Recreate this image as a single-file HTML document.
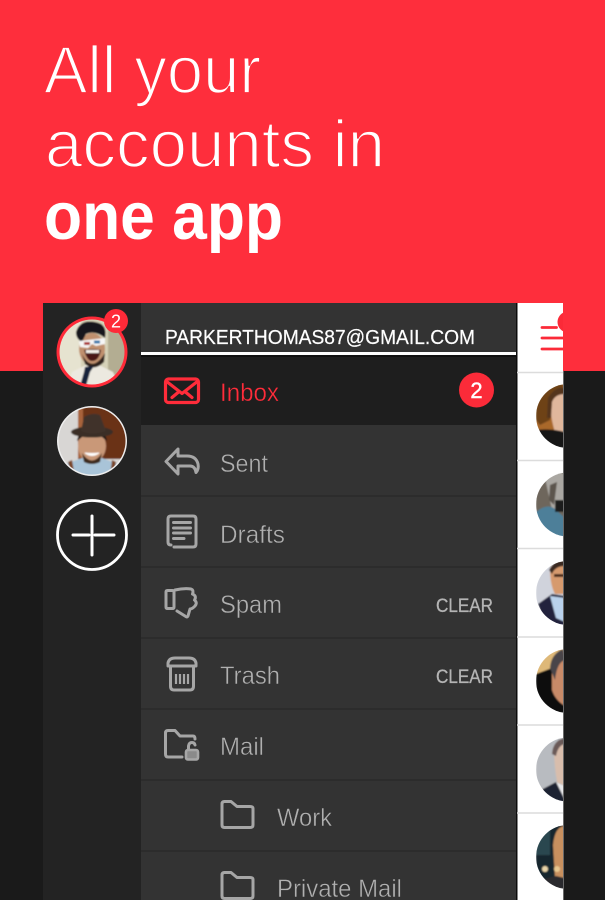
<!DOCTYPE html>
<html><head><meta charset="utf-8"><title>All your accounts in one app</title>
<style>
html,body{margin:0;padding:0;background:#1a1a1a}
svg{display:block}
text{font-family:"Liberation Sans",sans-serif}
.l{font-size:25px;fill:#b0b0b0;stroke:#333;stroke-width:.45}
.i{fill:none;stroke:#a6a6a6;stroke-width:3;stroke-linecap:round;stroke-linejoin:round}
.c{font-size:19px;fill:#b4b4b4;stroke:#b4b4b4;stroke-width:.3}
.sep{stroke:#2b2b2b;stroke-width:1.6}
.wsep{stroke:#dcdcdc;stroke-width:1.6}
</style></head>
<body>
<svg xmlns="http://www.w3.org/2000/svg" width="605" height="900" viewBox="0 0 605 900">
<defs>
<clipPath id="a1"><circle cx="92" cy="352" r="32.500"/></clipPath>
<clipPath id="a2"><circle cx="92" cy="441" r="33.500"/></clipPath>
<clipPath id="right"><rect x="517" y="303" width="46" height="597"/></clipPath>
<clipPath id="p1"><circle cx="568" cy="416" r="32"/></clipPath>
<clipPath id="p2"><circle cx="568" cy="504.500" r="32"/></clipPath>
<clipPath id="p3"><circle cx="568" cy="593" r="32"/></clipPath>
<clipPath id="p4"><circle cx="568" cy="681" r="32"/></clipPath>
<clipPath id="p5"><circle cx="568" cy="769.500" r="32"/></clipPath>
<clipPath id="p6"><circle cx="568" cy="857" r="32"/></clipPath>
<filter id="b" x="-10%" y="-10%" width="120%" height="120%"><feGaussianBlur stdDeviation=".8"/></filter>
</defs>

<rect width="605" height="900" fill="#1a1a1a"/>
<rect width="605" height="371" fill="#fe2e3c"/>

<g fill="#fff">
<text x="44" y="93" font-size="67" textLength="217" lengthAdjust="spacingAndGlyphs" stroke="#fe2e3c" stroke-width="1.800">All your</text>
<text x="45" y="167" font-size="67" textLength="340" lengthAdjust="spacingAndGlyphs" stroke="#fe2e3c" stroke-width="1.800">accounts in</text>
<text x="44" y="239" font-size="67" font-weight="700" textLength="239" lengthAdjust="spacingAndGlyphs">one app</text>
</g>

<!-- rail and drawer -->
<rect x="43" y="303" width="98" height="597" fill="#232323"/>
<rect x="141" y="303" width="376" height="597" fill="#333"/>
<rect x="141" y="355" width="376" height="70" fill="#1e1e1e"/>
<rect x="141" y="355" width="376" height="2" fill="#111"/>
<rect x="141" y="352" width="376" height="3" fill="#fff"/>
<line class="sep" x1="141" x2="517" y1="496" y2="496"/>
<line class="sep" x1="141" x2="517" y1="567" y2="567"/>
<line class="sep" x1="141" x2="517" y1="638" y2="638"/>
<line class="sep" x1="141" x2="517" y1="709" y2="709"/>
<line class="sep" x1="141" x2="517" y1="780" y2="780"/>
<line class="sep" x1="141" x2="517" y1="851" y2="851"/>

<text x="165" y="344" font-size="20" fill="#fff" stroke="#fff" stroke-width=".2" textLength="310" lengthAdjust="spacingAndGlyphs">PARKERTHOMAS87@GMAIL.COM</text>

<!-- avatar 1 -->
<circle cx="92" cy="352" r="35.500" fill="#ff2a38"/>
<g clip-path="url(#a1)"><g filter="url(#b)">
<rect x="57" y="317" width="70" height="70" fill="#d6d2b8"/>
<rect x="57" y="317" width="24" height="70" fill="#e6e3d0"/>
<rect x="108" y="317" width="20" height="70" fill="#b3ad92"/>
<path d="M68 387L72 372L86 365L99 365L113 372L120 387Z" fill="#ece9e0"/>
<ellipse cx="92" cy="349" rx="13" ry="16" fill="#c0906e"/>
<path d="M82 354Q92 374 105 353L104 362Q94 372 85 364Z" fill="#2e221c"/>
<path d="M76 332Q80 319 95 322Q108 324 105 338Q95 330 86 334L82 342Q76 339 76 332Z" fill="#17141a"/>
<path d="M84 350Q93 348 101 350Q99 361 92 361Q87 361 84 350Z" fill="#4a1616"/>
<rect x="86" y="350" width="13" height="3" fill="#f4f0ea"/>
<path d="M79 341L105 338L105 344L96 346L92 344L88 348L80 347Z" fill="#f6f6f6"/>
<rect x="84" y="342" width="6" height="3" fill="#a33"/><rect x="94" y="340.500" width="6" height="3" fill="#37a"/>
<path d="M85 367L94 366L90 372L86 386L80 386L84 372Z" fill="#16223a"/>
</g></g>

<circle cx="116" cy="321" r="12" fill="#ff2a38"/>
<text x="116" y="327.500" font-size="18" fill="#fff" text-anchor="middle">2</text>

<!-- avatar 2 -->
<circle cx="92" cy="441" r="35" fill="#eee"/>
<g clip-path="url(#a2)"><g filter="url(#b)">
<rect x="57" y="407" width="70" height="70" fill="#d8d6d4"/>
<rect x="78" y="407" width="50" height="52" fill="#6a3219"/>
<rect x="78" y="408" width="5" height="50" fill="#a8643a"/>
<path d="M62 477L66 464L82 458H102L118 464L122 477Z" fill="#a9c4d8"/>
<path d="M68 462L72 477H75L72 460ZM112 460L110 477H113L116 462Z" fill="#7a4526"/>
<ellipse cx="92" cy="446" rx="14" ry="16" fill="#c99878"/>
<path d="M82 453Q92 468 102 453L100 462Q92 466 84 462Z" fill="#3e2a1e"/>
<path d="M85 453Q92 458 99 453Q92 454 85 453Z" fill="#fff" stroke="#fff"/>
<path d="M77 441Q78 431 92 431Q106 431 107 441L102 437H82Z" fill="#1e1815"/>
<ellipse cx="92" cy="432" rx="21" ry="5.500" fill="#3a2e26"/>
<path d="M81 431L84 417Q92 412 100 415L106 431Q92 436 81 431Z" fill="#40332b"/>
</g></g>

<!-- plus -->
<circle cx="92" cy="535" r="34.500" fill="none" stroke="#fff" stroke-width="2.800"/>
<path d="M73 535H89M95 535H114M92 516V555" fill="none" stroke="#fff" stroke-width="3" stroke-linecap="round"/>

<!-- Inbox -->
<g fill="none" stroke="#ff2c3a" stroke-width="3.200" stroke-linecap="round" stroke-linejoin="round">
<rect x="165.500" y="379" width="33" height="23.500" rx="3"/>
<path d="M166 381L182 393.500L198 381M172 397.500L178 392.500M192 397.500L186 392.500"/>
</g>
<text x="220" y="401" font-size="25" fill="#ff2c3a" stroke="#1e1e1e" stroke-width=".35" textLength="59" lengthAdjust="spacingAndGlyphs">Inbox</text>
<circle cx="476.500" cy="390" r="17.500" fill="#fb2b39"/>
<text x="476.500" y="398" font-size="22" fill="#fff" stroke="#fff" stroke-width=".4" text-anchor="middle">2</text>

<!-- Sent -->
<path class="i" d="M178 449L166 461.500L178 474V466H190Q195 466 196 472.500Q199 469 198 464Q196 456 187 456H178Z"/>
<text class="l" x="220" y="472" textLength="48" lengthAdjust="spacingAndGlyphs">Sent</text>

<!-- Drafts -->
<path class="i" d="M171 545Q168 545 168 542V519Q168 516 171 516H193Q196 516 196 519V544Q196 547 193 547H174"/>
<path class="i" stroke-width="2.600" d="M173.500 522.500H190.500M173.500 528H190.500M173.500 533H190.500M173.500 538.500H184"/>
<text class="l" x="220" y="543" textLength="65" lengthAdjust="spacingAndGlyphs">Drafts</text>

<!-- Spam -->
<path class="i" d="M167.500 590.500H172.500Q174 590.500 174 592V607Q174 608.500 172.500 608.500H167.500Q166 608.500 166 607V592Q166 590.500 167.500 590.500Z"/>
<path class="i" d="M175 590Q184 588 191 589Q194 590 192.500 594Q197 596 194.500 600Q198 603 194.500 606.500Q192 609 190 609L188 616Q187 618 185 616L177 611"/>
<text class="l" x="220" y="613" textLength="62" lengthAdjust="spacingAndGlyphs">Spam</text>
<text class="c" x="436" y="612" textLength="57" lengthAdjust="spacingAndGlyphs">CLEAR</text>

<!-- Trash -->
<path class="i" d="M168 666V663Q169 658 175 658H189Q195 658 196 663V666Z"/>
<path class="i" d="M170.500 666V686Q170.500 690 174 690H190Q193.500 690 193.500 686V666"/>
<path d="M176 674V684M180 674V684M184 674V684M188 674V684" fill="none" stroke="#a6a6a6" stroke-width="2.200"/>
<text class="l" x="220" y="684" textLength="60" lengthAdjust="spacingAndGlyphs">Trash</text>
<text class="c" x="436" y="683" textLength="57" lengthAdjust="spacingAndGlyphs">CLEAR</text>

<!-- Mail -->
<path class="i" d="M182 757H168Q165.500 757 165.500 754V733Q165.500 730.500 168 730.500H175L180 736H193Q195 736 195 739"/>
<rect x="186" y="750" width="12" height="9.500" rx="2" fill="#8a8a8a" stroke="#a6a6a6" stroke-width="2.600"/>
<path class="i" stroke-width="2.400" d="M188.500 749V746Q189 742.500 192 742.500Q194.500 742.500 195 745"/>
<text class="l" x="220" y="755" textLength="44" lengthAdjust="spacingAndGlyphs">Mail</text>

<!-- Work -->
<path class="i" d="M224.500 827.500H250Q253 827.500 253 825V808.500Q253 806.500 250 806.500H237L231 801.500H224.500Q222 801.500 222 804V825Q222 827.500 224.500 827.500Z"/>
<text class="l" x="277" y="826" textLength="55" lengthAdjust="spacingAndGlyphs">Work</text>

<!-- Private Mail -->
<path class="i" d="M224.500 898.500H250Q253 898.500 253 896V879.500Q253 877.500 250 877.500H237L231 872.500H224.500Q222 872.500 222 875V896Q222 898.500 224.500 898.500Z"/>
<text class="l" x="277" y="897" textLength="125" lengthAdjust="spacingAndGlyphs">Private Mail</text>

<!-- right panel -->
<rect x="516" y="303" width="1.500" height="597" fill="#0c0c0c"/>
<rect x="517.500" y="303" width="45.500" height="597" fill="#fff"/>
<g clip-path="url(#right)">
<path d="M542 327.500H556.500M542 338H563M542 349H563" fill="none" stroke="#fb2a38" stroke-width="2.800" stroke-linecap="round"/>
<circle cx="568" cy="322" r="10.500" fill="#fb2a38"/>
<line class="wsep" x1="517" x2="563" y1="372.500" y2="372.500"/>
<line class="wsep" x1="517" x2="563" y1="460.500" y2="460.500"/>
<line class="wsep" x1="517" x2="563" y1="548.500" y2="548.500"/>
<line class="wsep" x1="517" x2="563" y1="637" y2="637"/>
<line class="wsep" x1="517" x2="563" y1="725" y2="725"/>
<line class="wsep" x1="517" x2="563" y1="813" y2="813"/>

<g clip-path="url(#p1)"><g filter="url(#b)">
<rect x="536" y="384" width="32" height="64" fill="#a9682a"/>
<path d="M536 384H563V392L553 396L550 420L540 425L536 420Z" fill="#6e4319"/>
<path d="M549 398Q556 388 565 392V432H555Q551 420 549 398Z" fill="#e0b79c"/>
<path d="M548 398Q555 386 565 388V394Q555 394 552 402L551 418L547 418Z" fill="#54341f"/>
<path d="M536 430Q550 428 565 432V448H536Z" fill="#181414"/>
</g></g>

<g clip-path="url(#p2)"><g filter="url(#b)">
<rect x="536" y="472" width="32" height="65" fill="#6e665c"/>
<path d="M545 478Q555 470 565 474V510H552Z" fill="#aaa7a2"/>
<path d="M550 485L557 482L554 505L549 500Z" fill="#5b544e"/>
<path d="M536 512Q548 502 556 510L565 518V537H536Z" fill="#4d7f99"/>
<rect x="555" y="500" width="10" height="12" fill="#1f1c1a"/>
</g></g>

<g clip-path="url(#p3)"><g filter="url(#b)">
<rect x="536" y="561" width="32" height="64" fill="#d0d3dc"/>
<path d="M550 568Q557 558 565 561V594H555Q550 585 550 568Z" fill="#d69a6e"/>
<path d="M549 570Q556 558 565 560V566Q555 566 552 574Z" fill="#3a2a22"/>
<rect x="554" y="574" width="10" height="3" fill="#4a2c1e"/>
<path d="M538 604L552 594L565 596V625H545Z" fill="#23223c"/>
<path d="M550 596L565 598V622L556 618Z" fill="#b9d2ec"/>
</g></g>

<g clip-path="url(#p4)"><g filter="url(#b)">
<rect x="536" y="649" width="32" height="64" fill="#deb878"/>
<path d="M536 674L552 668L565 680V713H536Z" fill="#111"/>
<path d="M552 666Q555 652 565 651V706Q555 700 552 690Z" fill="#c88a68"/>
<path d="M550 668Q551 654 563 649L565 660Q557 662 555 680Z" fill="#4a4448"/>
</g></g>

<g clip-path="url(#p5)"><g filter="url(#b)">
<rect x="536" y="737" width="32" height="65" fill="#b8bbc0"/>
<path d="M554 752Q555 740 565 739V785H558Q555 775 554 752Z" fill="#d8bdac"/>
<path d="M552 754Q553 740 565 738V744Q558 745 556 756Z" fill="#6a5a58"/>
<path d="M541 790L556 782L565 786V802H548Z" fill="#1e2033"/>
<path d="M556 782L565 786V800Z" fill="#e8e8ea"/>
</g></g>

<g clip-path="url(#p6)"><g filter="url(#b)">
<rect x="536" y="825" width="32" height="64" fill="#16282e"/>
<rect x="536" y="825" width="14" height="30" fill="#2a4650"/>
<path d="M553 845Q555 826 565 826V878H555Z" fill="#c8905e"/>
<circle cx="545" cy="869" r="3" fill="#e8d4a8"/>
<circle cx="557" cy="869" r="3" fill="#e8c890"/>
<path d="M540 880L556 876L565 878V889H545Z" fill="#2a2a2e"/>
</g></g>
</g>
<rect x="563" y="371" width="1" height="529" fill="#6a6a6a"/>
</svg>
</body></html>
